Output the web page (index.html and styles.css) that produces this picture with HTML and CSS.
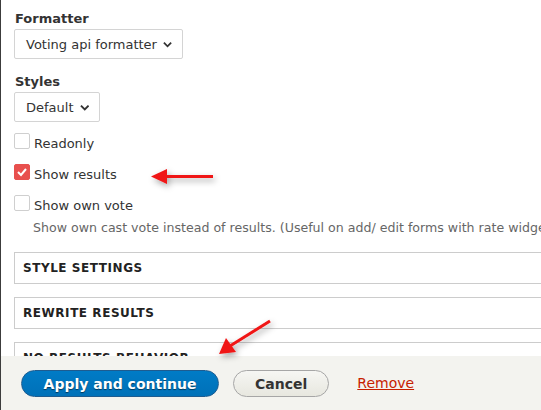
FILE: index.html
```html
<!DOCTYPE html>
<html>
<head>
<meta charset="utf-8">
<link rel="stylesheet" href="styles.css">
</head>
<body>
<div class="page">
  <div class="content">
    <div class="form-item">
      <label class="label">Formatter</label>
      <div class="select wide">Voting api formatter
        <svg class="chev" width="10" height="7" viewBox="0 0 10 7"><path d="M1 1.5 L5 5.5 L9 1.5" fill="none" stroke="#333" stroke-width="2"/></svg>
      </div>
    </div>
    <div class="form-item">
      <label class="label">Styles</label>
      <div class="select narrow">Default
        <svg class="chev" width="10" height="7" viewBox="0 0 10 7"><path d="M1 1.5 L5 5.5 L9 1.5" fill="none" stroke="#333" stroke-width="2"/></svg>
      </div>
    </div>
    <div class="checks">
      <div class="check"><span class="box"></span><span class="check-label">Readonly</span></div>
      <div class="check"><span class="box checked"><svg width="12" height="10" viewBox="0 0 12 10"><path d="M2 5 L5 8 L10 2" fill="none" stroke="#fff" stroke-width="2"/></svg></span><span class="check-label">Show results</span></div>
      <div class="check"><span class="box"></span><span class="check-label">Show own vote</span></div>
      <div class="desc">Show own cast vote instead of results. (Useful on add/ edit forms with rate widget)</div>
    </div>
    <div class="details"><span class="summary">Style settings</span></div>
    <div class="details"><span class="summary">Rewrite results</span></div>
    <div class="details"><span class="summary">No results behavior</span></div>
  </div>
  <div class="footer">
    <button class="btn primary">Apply and continue</button>
    <button class="btn">Cancel</button>
    <a class="remove" href="#">Remove</a>
  </div>
  <svg class="arrows" width="541" height="410" viewBox="0 0 541 410">
    <defs>
      <filter id="sh" x="-30%" y="-30%" width="160%" height="160%">
        <feDropShadow dx="2" dy="3" stdDeviation="3" flood-color="#000" flood-opacity="0.35"/>
      </filter>
    </defs>
    <g filter="url(#sh)" fill="#f01414" stroke="#f01414">
      <line x1="213" y1="176.5" x2="162" y2="176.5" stroke-width="3"/>
      <polygon points="151,176.5 167,169 167,184" stroke="none"/>
      <line x1="270" y1="321" x2="230" y2="346" stroke-width="3"/>
      <polygon points="219,354 226,338 236,352" stroke="none"/>
    </g>
  </svg>
</div>
</body>
</html>
```
FILE: styles.css
```css
html, body {
  margin: 0;
  padding: 0;
  background: #fff;
}
body {
  font-family: "DejaVu Sans", Verdana, sans-serif;
  color: #333;
  font-size: 13px;
}
.page {
  position: relative;
  width: 541px;
  height: 410px;
  overflow: hidden;
  display: flex;
  flex-direction: column;
  border-left: 1px solid #3c3c3c;
  box-sizing: border-box;
}
.content {
  flex: 1 1 auto;
  overflow: hidden;
  padding: 10px 0 0 13px;
}
.form-item {
  margin-bottom: 14px;
}
.label {
  display: block;
  font-weight: bold;
  font-size: 13px;
  line-height: 18px;
  margin-bottom: 1px;
  padding-left: 1px;
}
.select {
  display: inline-flex;
  align-items: center;
  height: 30px;
  box-sizing: border-box;
  border: 1px solid #d4d4d4;
  border-radius: 2px;
  padding: 0 10px 0 11px;
  font-size: 13px;
  color: #333;
  gap: 6px;
  white-space: nowrap;
}
.select.wide {
  width: 169px;
}
.select.narrow {
  width: 86px;
}
.chev {
  margin-top: 1px;
}
.checks {
  margin-top: -3px;
}
.check {
  display: flex;
  align-items: center;
  height: 16px;
  margin-bottom: 15px;
}
.box {
  width: 16px;
  height: 16px;
  box-sizing: border-box;
  border: 1px solid #cfcfcf;
  border-radius: 2px;
  display: flex;
  align-items: center;
  justify-content: center;
}
.box.checked {
  background: #e8504e;
  border-color: #e8504e;
}
.check-label {
  margin-left: 4px;
  font-size: 13px;
  padding-top: 5px;
}
.desc {
  margin: -6px 0 0 19px;
  font-size: 12.6px;
  color: #666;
  white-space: nowrap;
  line-height: 16px;
}
.details {
  border: 1px solid #ccc;
  height: 32px;
  box-sizing: border-box;
  width: 560px;
  display: flex;
  align-items: center;
  padding-left: 8px;
}
.details + .details {
  margin-top: 13px;
}
.checks + .details {
  margin-top: 16px;
}
.summary {
  text-transform: uppercase;
  font-weight: bold;
  font-size: 12px;
  letter-spacing: 0.55px;
  color: #222;
}
.footer {
  flex: 0 0 54px;
  background: #f3f3ef;
  display: flex;
  align-items: center;
  padding: 0 0 0 20px;
  gap: 14px;
}
.btn {
  font-family: "DejaVu Sans", Verdana, sans-serif;
  font-weight: bold;
  font-size: 14px;
  height: 27px;
  border-radius: 20px;
  border: 1px solid #a6a6a6;
  background: linear-gradient(#f6f6f3, #e7e7df);
  color: #333;
  padding: 0 21px;
  margin-top: 1px;
}
.btn.primary {
  width: 198px;
  background: linear-gradient(#007bc6, #0071b8);
  border-color: #1e5c90;
  color: #fff;
  text-shadow: 0 1px 1px rgba(0,0,0,0.5);
}
.remove {
  margin-left: 14px;
  color: #c72100;
  font-size: 14px;
  text-decoration: underline;
}
.arrows {
  position: absolute;
  left: -1px;
  top: 0;
  pointer-events: none;
}
```
